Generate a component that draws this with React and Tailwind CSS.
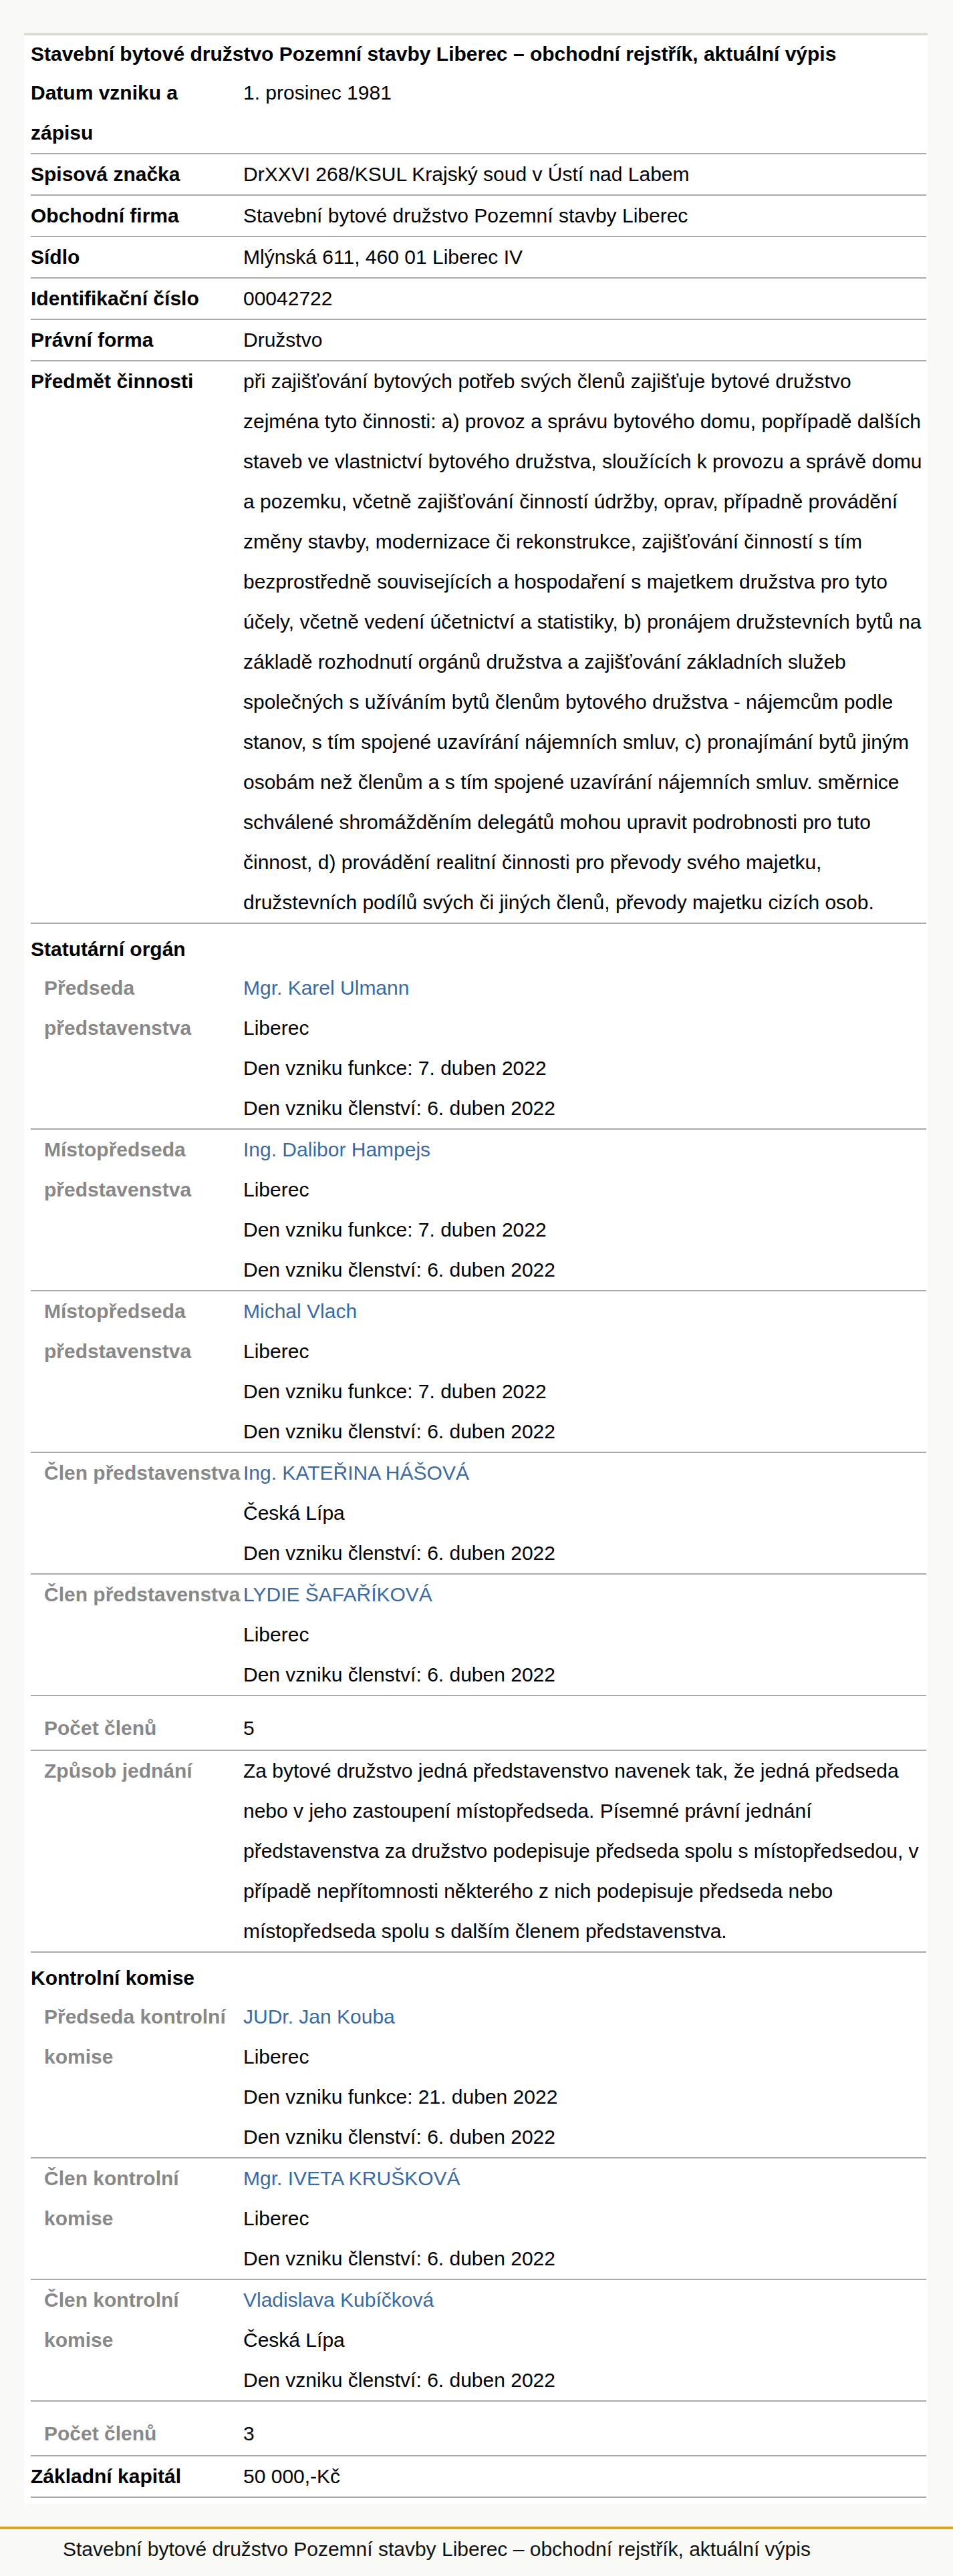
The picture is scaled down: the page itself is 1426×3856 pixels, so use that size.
import React from 'react';

const predmet =
    'při zajišťování bytových potřeb svých členů zajišťuje bytové družstvo zejména tyto činnosti: a) provoz a správu bytového domu, popřípadě dalších staveb ve vlastnictví bytového družstva, sloužících k provozu a správě domu a pozemku, včetně zajišťování činností údržby, oprav, případně provádění změny stavby, modernizace či rekonstrukce, zajišťování činností s tím bezprostředně souvisejících a hospodaření s majetkem družstva pro tyto účely, včetně vedení účetnictví a statistiky, b) pronájem družstevních bytů na základě rozhodnutí orgánů družstva a zajišťování základních služeb společných s užíváním bytů členům bytového družstva - nájemcům podle stanov, s tím spojené uzavírání nájemních smluv, c) pronajímání bytů jiným osobám než členům a s tím spojené uzavírání nájemních smluv. směrnice schválené shromážděním delegátů mohou upravit podrobnosti pro tuto činnost, d) provádění realitní činnosti pro převody svého majetku, družstevních podílů svých či jiných členů, převody majetku cizích osob.';

const zpusob =
    'Za bytové družstvo jedná představenstvo navenek tak, že jedná předseda nebo v jeho zastoupení místopředseda. Písemné právní jednání představenstva za družstvo podepisuje předseda spolu s místopředsedou, v případě nepřítomnosti některého z nich podepisuje předseda nebo místopředseda spolu s dalším členem představenstva.';

const basicRows = [
    { label: 'Datum vzniku a zápisu', value: '1. prosinec 1981' },
    { label: 'Spisová značka', value: 'DrXXVI 268/KSUL Krajský soud v Ústí nad Labem' },
    { label: 'Obchodní firma', value: 'Stavební bytové družstvo Pozemní stavby Liberec' },
    { label: 'Sídlo', value: 'Mlýnská 611, 460 01 Liberec IV' },
    { label: 'Identifikační číslo', value: '00042722' },
    { label: 'Právní forma', value: 'Družstvo' },
    { label: 'Předmět činnosti', value: predmet },
];

const predstavenstvo = [
    { role: 'Předseda představenstva', name: 'Mgr. Karel Ulmann', city: 'Liberec', funkce: '7. duben 2022', clenstvi: '6. duben 2022' },
    { role: 'Místopředseda představenstva', name: 'Ing. Dalibor Hampejs', city: 'Liberec', funkce: '7. duben 2022', clenstvi: '6. duben 2022' },
    { role: 'Místopředseda představenstva', name: 'Michal Vlach', city: 'Liberec', funkce: '7. duben 2022', clenstvi: '6. duben 2022' },
    { role: 'Člen představenstva', name: 'Ing. KATEŘINA HÁŠOVÁ', city: 'Česká Lípa', clenstvi: '6. duben 2022' },
    { role: 'Člen představenstva', name: 'LYDIE ŠAFAŘÍKOVÁ', city: 'Liberec', clenstvi: '6. duben 2022' },
];

const komise = [
    { role: 'Předseda kontrolní komise', name: 'JUDr. Jan Kouba', city: 'Liberec', funkce: '21. duben 2022', clenstvi: '6. duben 2022' },
    { role: 'Člen kontrolní komise', name: 'Mgr. IVETA KRUŠKOVÁ', city: 'Liberec', clenstvi: '6. duben 2022' },
    { role: 'Člen kontrolní komise', name: 'Vladislava Kubíčková', city: 'Česká Lípa', clenstvi: '6. duben 2022' },
];

function Row({ label, children, sub, spaced }) {
    return (
        <div className={`flex border-b-2 border-[#aaaaaa] ${spaced ? 'pt-[18px] pb-[2px]' : ''}`}>
            <div className={`w-[318px] shrink-0 pr-[2px] font-bold ${sub ? 'pl-[20px] text-[#888888]' : ''}`}>
                {label}
            </div>
            <div className="flex-1 min-w-0">{children}</div>
        </div>
    );
}

function Person({ p }) {
    return (
        <Row label={p.role} sub>
            <div className="text-[#3b6aa3]">{p.name}</div>
            <div>{p.city}</div>
            {p.funkce && <div>Den vzniku funkce: {p.funkce}</div>}
            <div>Den vzniku členství: {p.clenstvi}</div>
        </Row>
    );
}

function SectionHead({ children }) {
    return <div className="pt-[10px] font-bold leading-[56px]">{children}</div>;
}

export default function App() {
    return (
        <div className="min-h-[3856px] bg-[#f9f9f5] pt-[49px] pb-[9px] font-['Liberation_Sans',Arial,sans-serif] text-[30px] leading-[60px] text-black">
            <div className="ml-[36px] w-[1352px] border-t-4 border-[#dcdcd2] bg-white pl-[10px] pr-[2px] pb-[9px]">
                <h1 className="font-bold leading-[56px]">
                    Stavební bytové družstvo Pozemní stavby Liberec – obchodní rejstřík, aktuální výpis
                </h1>

                {basicRows.map((r, i) => (
                    <Row key={i} label={r.label}>{r.value}</Row>
                ))}

                <SectionHead>Statutární orgán</SectionHead>
                {predstavenstvo.map((p, i) => (
                    <Person key={i} p={p} />
                ))}
                <Row label="Počet členů" sub spaced>5</Row>
                <Row label="Způsob jednání" sub>{zpusob}</Row>

                <SectionHead>Kontrolní komise</SectionHead>
                {komise.map((p, i) => (
                    <Person key={i} p={p} />
                ))}
                <Row label="Počet členů" sub spaced>3</Row>
                <Row label="Základní kapitál">50 000,-Kč</Row>
            </div>

            <footer className="mt-[34px] border-t-4 border-[#daa520] pl-[94px] text-[#111111]">
                Stavební bytové družstvo Pozemní stavby Liberec – obchodní rejstřík, aktuální výpis
            </footer>
        </div>
    );
}
